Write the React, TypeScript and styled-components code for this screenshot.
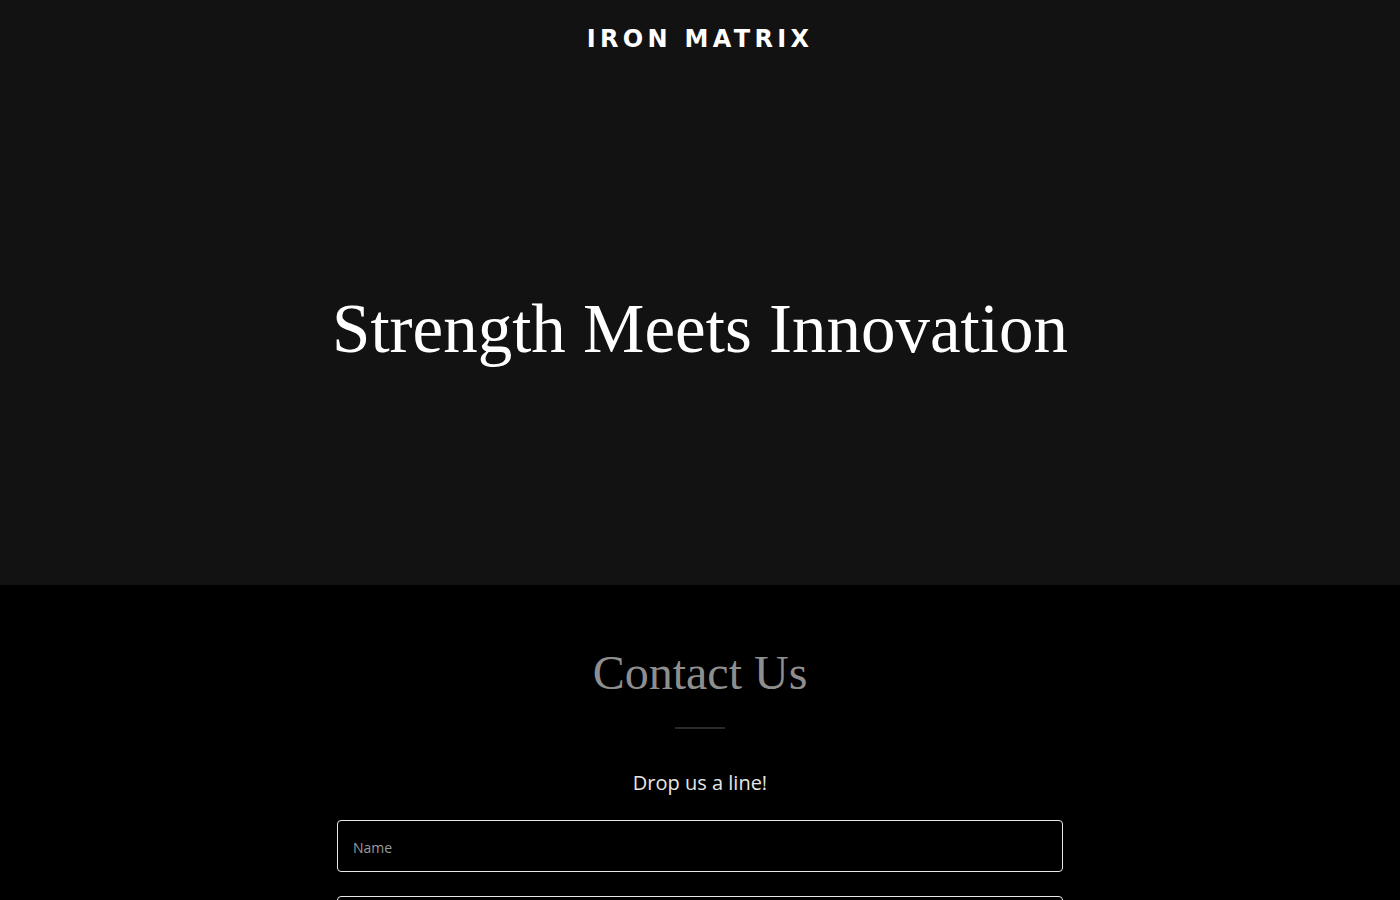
import React from 'react';
import styled, { createGlobalStyle } from 'styled-components';

const GlobalStyle = createGlobalStyle`
  * { box-sizing: border-box; }
  body {
    margin: 0;
    background: #000;
    font-family: "Open Sans", "Noto Sans", sans-serif;
  }
`;

const Hero = styled.header`
  background: #121212;
  height: 585px;
  display: flex;
  flex-direction: column;
  align-items: center;
`;

const Logo = styled.div`
  margin-top: 25px;
  font-family: "DejaVu Sans", sans-serif;
  font-weight: 700;
  font-size: 24px;
  letter-spacing: 4.3px;
  color: #fff;
  line-height: 28px;
`;

const HeroTitle = styled.h1`
  margin: 236px 0 0;
  font-family: "Liberation Serif", "DejaVu Serif", serif;
  font-weight: 400;
  font-size: 69px;
  line-height: 80px;
  color: #fff;
`;

const Contact = styled.section`
  background: #000;
  display: flex;
  flex-direction: column;
  align-items: center;
  padding: 60px 0 40px;
`;

const ContactTitle = styled.h2`
  margin: 0;
  font-family: "Liberation Serif", "DejaVu Serif", serif;
  font-weight: 400;
  font-size: 48px;
  line-height: 56px;
  color: #8e8e8e;
`;

const Divider = styled.hr`
  width: 50px;
  border: 0;
  border-top: 2px solid #2a2a2a;
  margin: 26px 0 40px;
`;

const Lead = styled.p`
  margin: 0 0 23px;
  font-size: 20px;
  line-height: 28px;
  color: #e6e6e6;
`;

const Form = styled.form`
  width: 726px;
  display: flex;
  flex-direction: column;
  gap: 24px;
`;

const Input = styled.input`
  height: 52px;
  width: 100%;
  background: #000;
  border: 1px solid #e8e8e8;
  border-radius: 4px;
  padding: 2px 15px 0;
  font-family: "Open Sans", sans-serif;
  font-size: 14px;
  color: #fff;
  &::placeholder { color: #9a9a9a; }
  &:focus { outline: none; }
`;

export default function App() {
  return (
    <>
      <GlobalStyle />
      <Hero>
        <Logo>IRON MATRIX</Logo>
        <HeroTitle>Strength Meets Innovation</HeroTitle>
      </Hero>
      <Contact>
        <ContactTitle>Contact Us</ContactTitle>
        <Divider />
        <Lead>Drop us a line!</Lead>
        <Form>
          <Input placeholder="Name" />
          <Input placeholder="Email*" />
        </Form>
      </Contact>
    </>
  );
}
